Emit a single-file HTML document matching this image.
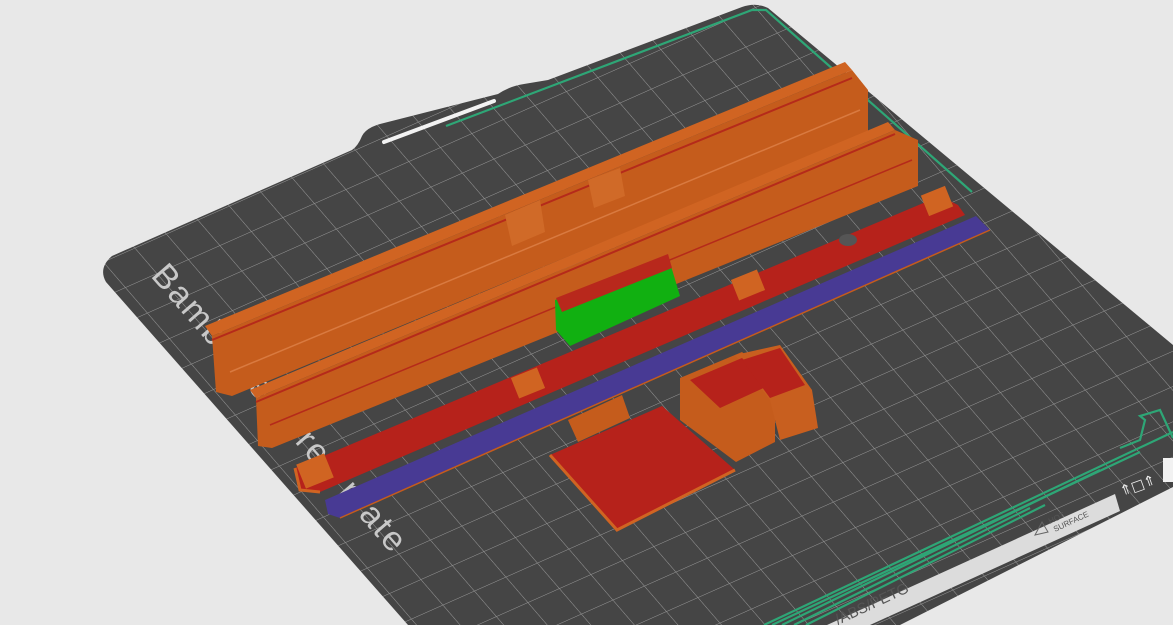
<!DOCTYPE html>
<html><head><meta charset="utf-8"><style>
html,body{margin:0;padding:0;background:#e8e8e8;width:1173px;height:625px;overflow:hidden}
svg{display:block}
</style></head><body>
<svg width="1173" height="625" viewBox="0 0 1173 625" xmlns="http://www.w3.org/2000/svg">
<defs>
<pattern id="grid" patternUnits="userSpaceOnUse" width="10" height="10" patternTransform="matrix(3.15,-1.4,2.2,2.55,103,262)">
<rect width="10" height="10" fill="#454545"/>
<path d="M0 0H10M0 0V10" stroke="#9a9a9a" stroke-width="0.3" fill="none"/>
</pattern>
<clipPath id="plate"><path d="M112 256 L352 150 Q358 146 362 136 Q366 128 380 124 L498 94 Q510 86 524 84 L548 80 L742 7 Q756 2 768 8 L1173 345 L1173 487 L900 625 L408 625 L106 282 Q98 268 112 256Z"/></clipPath>
</defs>
<path d="M112 256 L352 150 Q358 146 362 136 Q366 128 380 124 L498 94 Q510 86 524 84 L548 80 L742 7 Q756 2 768 8 L1173 345 L1173 487 L900 625 L408 625 L106 282 Q98 268 112 256Z" fill="url(#grid)"/>
<!-- slot -->
<path d="M384 142 L494 101" stroke="#f2f2f2" stroke-width="4" stroke-linecap="round"/>
<!-- green outline lines -->
<g clip-path="url(#plate)" stroke="#2ea676" stroke-width="2.2" fill="none">
<path d="M446 126 L752 10 L766 10 L972 192"/>
<path d="M764 625 L1173 432"/>
<path d="M772 625 L1140 452"/>
<path d="M782 625 L1100 470"/>
<path d="M794 625 L1030 508"/>
<path d="M806 625 L1045 505"/>
<path d="M1120 448 L1140 440 L1145 420 L1140 416 L1160 410 L1173 438"/>
</g>
<!-- bottom label strip -->
<path d="M827 625 L1115 494 L1120 511 L870 625Z" fill="#dcdcdc"/>
<text font-family="Liberation Sans, sans-serif" font-size="15" fill="#555" transform="translate(838 625) rotate(-25)">/ABS/PETG</text>
<text font-family="Liberation Sans, sans-serif" font-size="8" fill="#555" transform="translate(1050 524) rotate(-25)">HOT</text>
<text font-family="Liberation Sans, sans-serif" font-size="8" fill="#555" transform="translate(1055 532) rotate(-25)">SURFACE</text>
<path d="M1035 535 L1042 522 L1048 532Z" fill="none" stroke="#666" stroke-width="1"/>
<rect x="1163" y="458" width="10" height="24" fill="#f2f2f2"/>
<text font-family="DejaVu Sans, sans-serif" font-size="14" fill="#eee" transform="translate(1122 496) rotate(-20)">⇑□⇑</text>
<!-- Bambu text -->
<text font-family="Liberation Sans, sans-serif" font-size="34" fill="#c8c8c8" letter-spacing="2" transform="translate(150 276) rotate(49)">Bambu Textured plate</text>
<!-- Rail 1 -->
<path d="M205 326 L845 62 L852 70 L212 336Z" fill="#d06422"/>
<path d="M212 336 L852 70 L868 90 L868 132 L232 396 L216 392 Z" fill="#c55c1c"/>
<path d="M212 340 L852 78" stroke="#b52a1a" stroke-width="2"/>
<path d="M230 372 L860 110" stroke="#d97a40" stroke-width="1.5"/>
<path d="M505 215 L540 200 L545 232 L512 246Z" fill="#d06a28"/>
<path d="M588 180 L620 168 L625 196 L594 208Z" fill="#d06a28"/>
<!-- Rail 2 -->
<path d="M250 390 L888 122 L895 130 L256 398Z" fill="#d06422"/>
<path d="M256 398 L895 130 L918 140 L918 186 L272 448 L258 446Z" fill="#c55c1c"/>
<path d="M256 402 L895 134" stroke="#b52a1a" stroke-width="2"/>
<path d="M270 425 L912 160" stroke="#b52a1a" stroke-width="1.5"/>
<!-- green part -->
<path d="M555 300 L668 256 L680 296 L570 346 L556 330Z" fill="#11b011"/>
<path d="M556 298 L668 254 L672 268 L562 312Z" fill="#b8281c"/>
<!-- red bar -->
<path d="M295 468 L940 196 L958 205 L965 215 L320 492 L300 490Z" fill="#b6221b"/>
<path d="M295 468 L300 490 L320 492" stroke="#d06422" stroke-width="3" fill="none"/>
<rect x="300" y="458" width="30" height="26" fill="#d06422" transform="rotate(-22 315 471)"/>
<rect x="514" y="372" width="28" height="22" fill="#d06422" transform="rotate(-22 528 383)"/>
<rect x="734" y="274" width="28" height="22" fill="#d06422" transform="rotate(-22 748 285)"/>
<rect x="924" y="190" width="26" height="22" fill="#d06422" transform="rotate(-22 937 201)"/>
<ellipse cx="848" cy="240" rx="9" ry="6" fill="#555"/>
<!-- purple bar -->
<path d="M325 500 L976 216 L990 230 L340 518 L328 514Z" fill="#483a94"/>
<path d="M340 518 L990 230" stroke="#c55c1c" stroke-width="1.5"/>
<!-- cylinder -->
<path d="M568 420 L622 395 L630 418 L578 442Z" fill="#c55c1c"/>
<!-- red square -->
<path d="M550 455 L662 406 L735 470 L617 530Z" fill="#b6221b"/>
<path d="M550 455 L617 530 L735 470" stroke="#d06422" stroke-width="3" fill="none"/>
<!-- boxes -->
<path d="M680 378 L742 352 L775 380 L775 442 L736 462 L680 420Z" fill="#c55c1c"/>
<path d="M735 355 L780 345 L812 390 L818 428 L780 440 L770 400Z" fill="#c85f1f"/>
<path d="M690 380 L742 358 L770 385 L720 408Z" fill="#b6221b"/>
<path d="M742 360 L780 348 L805 385 L770 398Z" fill="#b6221b"/>
</svg>
</body></html>
